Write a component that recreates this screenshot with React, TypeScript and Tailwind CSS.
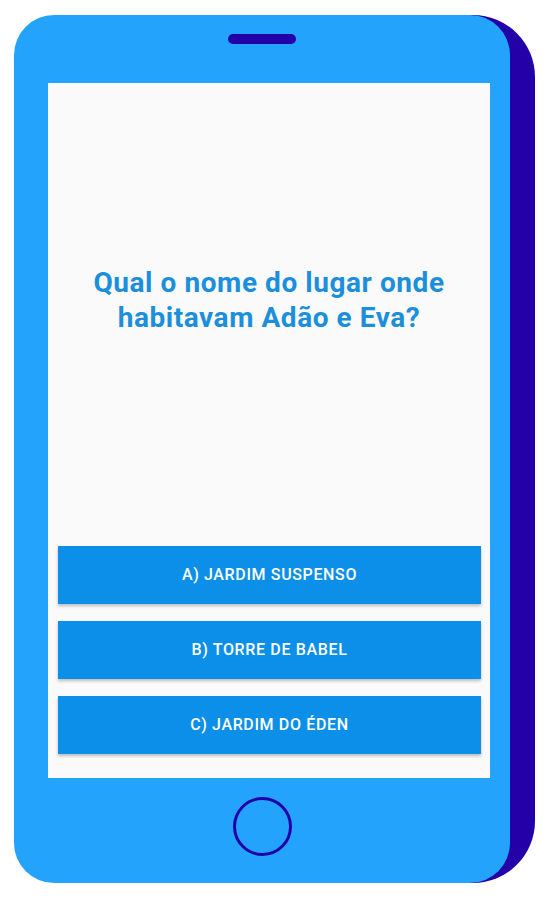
const answers = ["A) JARDIM SUSPENSO", "B) TORRE DE BABEL", "C) JARDIM DO ÉDEN"];

export default function App() {
  return (
    <div className="min-h-screen w-[555px] bg-white pt-[15px] pl-[14px]" style={{ fontFamily: "Roboto, 'Liberation Sans', sans-serif" }}>
      <div className="relative w-[496px] h-[868px]">
        {/* back side of the phone */}
        <div className="absolute top-0 left-[60px] right-[-25px] bottom-0 rounded-[62px] bg-[#2400a8]" />

        <div className="relative h-full rounded-[40px] bg-[#24a3fc] flex flex-col items-center">
          <div className="mt-[19px] w-[68px] h-[10px] rounded-full bg-[#2400a8]" />

          <div className="mt-[39px] ml-[14px] w-[442px] h-[695px] bg-[#fafafa] flex flex-col">
            <div className="pt-[182px] px-4">
              <h1 className="text-[28px] leading-[35px] font-bold tracking-[0.02em] text-[#1b8fdc] text-center">
                Qual o nome do lugar onde
                <br />
                habitavam Adão e Eva?
              </h1>
            </div>

            <div className="mt-auto pl-[10px] pr-[9px] pb-[24px] flex flex-col gap-[17px]">
              {answers.map((a) => (
                <button
                  key={a}
                  className="h-[58px] w-full bg-[#0b8fe9] text-white text-[16px] font-medium tracking-[0.04em] shadow-[0_2px_3px_rgba(0,0,0,0.25)]"
                >
                  {a}
                </button>
              ))}
            </div>
          </div>

          <div className="mt-[19px] w-[59px] h-[59px] rounded-full border-[3px] border-[#2400a8]" />
        </div>
      </div>
    </div>
  );
}
